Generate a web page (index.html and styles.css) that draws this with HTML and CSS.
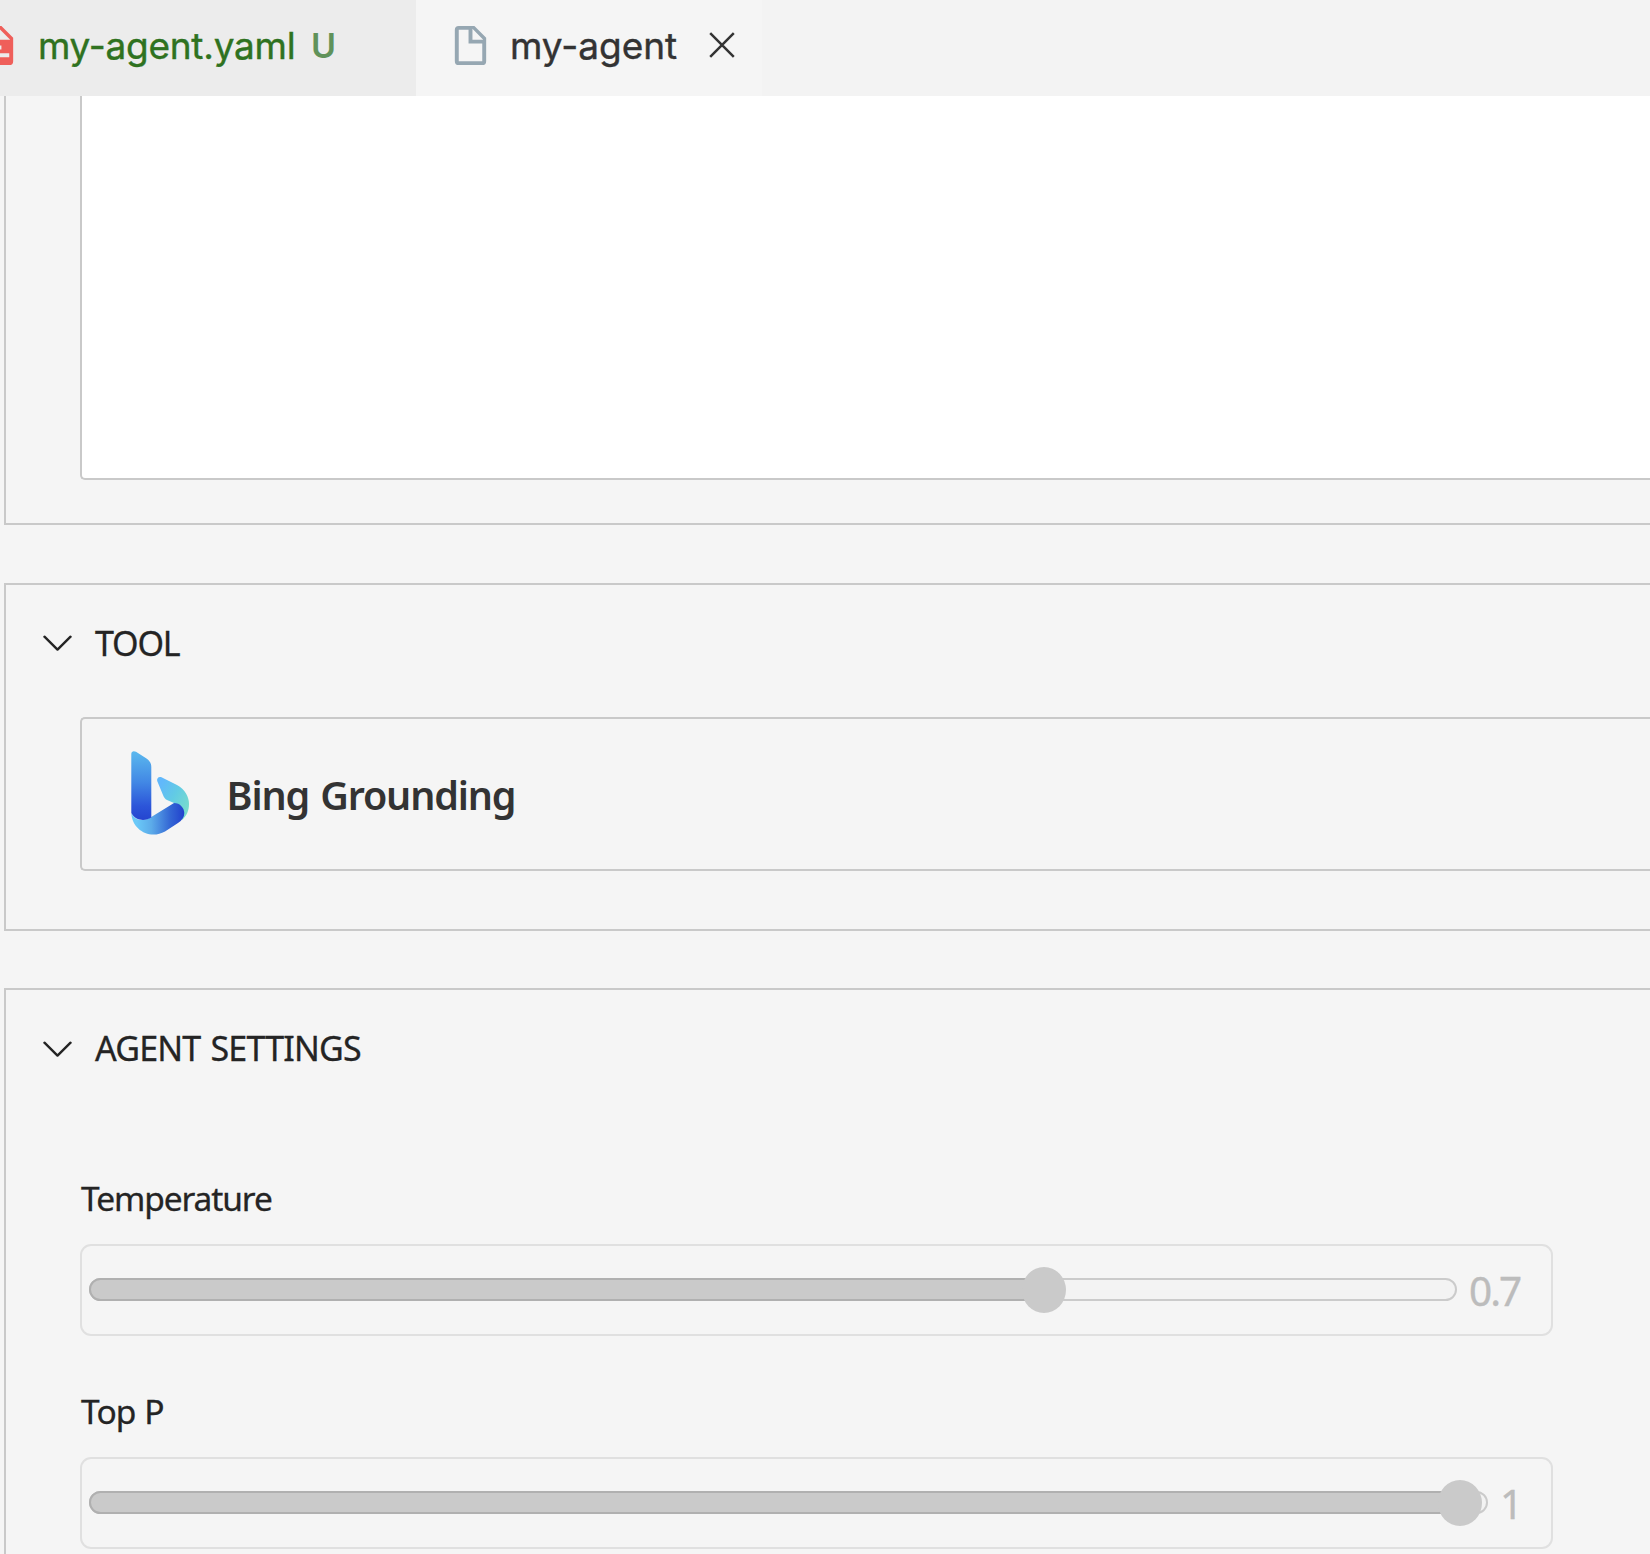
FILE: index.html
```html
<!DOCTYPE html>
<html lang="en">
<head>
<meta charset="utf-8">
<title>my-agent</title>
<link rel="stylesheet" href="styles.css">
</head>
<body>
<div class="tabs">
  <div class="tab tab-yaml">
    <svg class="file-icon" viewBox="0 0 24 24"><path fill="#ef5f5a" d="M13 9h5.5L13 3.5V9M6 2h8l6 6v12a2 2 0 0 1-2 2H6a2 2 0 0 1-2-2V4a2 2 0 0 1 2-2m12 16v-2H9v2h9m-4-4v-2H6v2h8Z"/></svg>
    <span class="tab-name">my-agent.yaml</span>
    <span class="git-status">U</span>
  </div>
  <div class="tab tab-active">
    <svg class="file-icon" viewBox="0 0 24 24"><path fill="#96a7b2" d="M13 9h5.5L13 3.5V9M6 2h8l6 6v12a2 2 0 0 1-2 2H6a2 2 0 0 1-2-2V4a2 2 0 0 1 2-2m5 2H6v16h12v-9h-7V4Z"/></svg>
    <span class="tab-name">my-agent</span>
    <svg class="close" viewBox="0 0 26 26"><path d="M1.2 1.2l23.6 23.6M24.8 1.2L1.2 24.8"/></svg>
  </div>
</div>
<main class="editor">
  <section class="panel instructions">
    <div class="textarea"></div>
  </section>
  <section class="panel tool">
    <header class="panel-head">
      <svg class="chevron" viewBox="0 0 30 17"><path d="M1.5 1.5L15 14.8L28.5 1.5"/></svg>
      <h2 class="title title-tool">TOOL</h2>
    </header>
    <div class="card">
      <svg class="bing" viewBox="0 0 58 84">
        <defs>
          <linearGradient id="stem" x1="0" y1="0" x2="0" y2="1"><stop offset="0" stop-color="#5bb9ee"/><stop offset=".45" stop-color="#4288e5"/><stop offset=".8" stop-color="#2c55d9"/><stop offset="1" stop-color="#2545cf"/></linearGradient>
          <linearGradient id="wing" x1="0" y1="0" x2="1" y2=".75"><stop offset=".15" stop-color="#61b8fb"/><stop offset=".55" stop-color="#62cbe4"/><stop offset="1" stop-color="#79dccb"/></linearGradient>
          <linearGradient id="band" x1="0" y1="0" x2="1" y2="0"><stop offset=".1" stop-color="#6ac9f8"/><stop offset=".38" stop-color="#5cabe9"/><stop offset=".72" stop-color="#3569d5"/><stop offset="1" stop-color="#2141cd"/></linearGradient>
        </defs>
        <path fill="url(#wing)" d="M26.2 30C25.5 27 28 25 31 26.5L46 34C54 38 58 46 58 53C58 60 55.5 65 51 69L43 52L36 49C34 48 33 46.500 32 44Z"/>
        <path fill="url(#band)" d="M.3 62C4 70 12 71 20.300 66L43 52C49 52 53.300 57 53.300 62C53.300 66 51 69.500 47 72L34 80.500C19 89 1 79 .3 62Z"/>
        <path fill="url(#stem)" d="M.3 3C.3 0 3 -.5 5 .8L15.500 7.500C19 10 20.300 12.500 20.300 16V66.500C13 71 4 69 .3 62Z"/>
      </svg>
      <span class="card-name">Bing Grounding</span>
    </div>
  </section>
  <section class="panel settings">
    <header class="panel-head">
      <svg class="chevron" viewBox="0 0 30 17"><path d="M1.5 1.5L15 14.8L28.5 1.5"/></svg>
      <h2 class="title title-settings">AGENT SETTINGS</h2>
    </header>
    <div class="fields">
      <div class="field">
        <div class="label label-temp">Temperature</div>
        <div class="slider">
          <div class="track"><div class="fill" style="width:955px"></div><div class="thumb"></div></div>
          <span class="value">0.7</span>
        </div>
      </div>
      <div class="field">
        <div class="label label-top">Top P</div>
        <div class="slider">
          <div class="track"><div class="fill" style="width:1371px"></div><div class="thumb"></div></div>
          <span class="value value-one">1</span>
        </div>
      </div>
    </div>
  </section>
</main>
</body>
</html>
```
FILE: styles.css
```css
* { box-sizing: border-box; }
body {
  margin: 0;
  height: 1554px;
  overflow: hidden;
  background: #f5f5f5;
  color: #242424;
  font-family: "Noto Sans", sans-serif;
}
svg { display: block; flex: none; }
.tabs {
  display: flex;
  height: 96px;
  background: #f3f3f3;
  font-family: Inter, sans-serif;
  font-size: 37px;
  line-height: 44px;
  white-space: nowrap;
}
.tab { display: flex; align-items: center; height: 96px; padding-bottom: 6px; }
.tab-yaml { width: 416px; background: #ececec; color: #2f7220; }
.tab-active { width: 346px; padding-left: 31px; background: #f5f5f5; color: #333; }
.file-icon { width: 47px; height: 47px; }
.tab-name, .git-status { padding-top: 2px; }
.tab-name { -webkit-text-stroke: 0.4px currentColor; }
.tab-yaml .file-icon { margin-left: -26px; }
.tab-yaml .tab-name { width: 257px; margin-left: 17px; letter-spacing: -0.25px; }
.git-status { margin-left: 16px; font-weight: 600; font-size: 34px; color: #60925a; }
.tab-active .tab-name { width: 170px; margin-left: 16px; }
.close { width: 26px; height: 26px; margin-left: 28.5px; }
.close path { fill: none; stroke: #333; stroke-width: 2.5; }

.editor { padding-left: 4px; }
.panel { border: 2px solid #c9c9c9; border-right: 0; }
.instructions { height: 429px; padding-left: 74px; border-top: 0; }
.textarea {
  height: 384px;
  background: #fff;
  border: solid #c9c9c9;
  border-width: 0 0 2px 2px;
  border-bottom-left-radius: 5px;
}
.tool { height: 348px; margin-top: 58px; }
.panel-head { display: flex; align-items: center; height: 116px; padding: 1px 0 0 37px; }
.settings .chevron { margin-top: 2px; }
.chevron { width: 29px; height: 17px; }
.chevron path { fill: none; stroke: #242424; stroke-width: 2.5; stroke-linecap: round; stroke-linejoin: round; }
.title { margin: 0 0 1px 23px; font-size: 34px; line-height: 46px; font-weight: 400; white-space: nowrap; }
.title-tool { letter-spacing: -1.2px; }
.title-settings { letter-spacing: -0.8px; word-spacing: 2px; }
.title, .label { -webkit-text-stroke: 0.3px currentColor; }
.card {
  display: flex;
  align-items: center;
  height: 154px;
  margin: 16px 0 0 74px;
  padding-left: 49px;
  border: 2px solid #c9c9c9;
  border-right: 0;
  border-radius: 5px 0 0 5px;
}
.bing { width: 58px; height: 84px; margin-bottom: 2px; }
.card-name {
  margin-left: 37.5px;
  padding-top: 2px;
  font-size: 39.5px;
  line-height: 56px;
  font-weight: 600;
  letter-spacing: -1.15px;
  word-spacing: 2px;
  color: #333;
  white-space: nowrap;
}
.settings { height: 620px; margin-top: 57px; }
.fields { display: flex; flex-direction: column; gap: 51px; padding: 68px 0 0 74px; }
.label { height: 48px; margin: 0 0 22px 1px; font-size: 33.5px; line-height: 48px; }
.label-temp { letter-spacing: -1.1px; }
.label-top { letter-spacing: -0.9px; word-spacing: 1px; }
.slider {
  display: flex;
  align-items: center;
  width: 1473px;
  height: 92px;
  padding: 0 30px 0 7px;
  border: 2px solid #e0e0e0;
  border-radius: 11px;
}
.track {
  display: flex;
  flex: 1;
  align-items: center;
  height: 23px;
  margin-bottom: 1px;
  border: 2px solid #cbcbcb;
  border-radius: 12px;
  background: #f3f3f3;
}
.fill {
  flex: none;
  height: 23px;
  margin-left: -2px;
  border: 2px solid #b0b0b0;
  border-radius: 12px 0 0 12px;
  background: #cacaca;
}
.thumb { flex: none; width: 44px; height: 46px; margin: 1px 0 0 -22px; border-radius: 50%; background: #cacaca; }
.value {
  width: 52px;
  margin-left: 12px;
  padding-top: 2px;
  font-size: 40.5px;
  line-height: 56px;
  letter-spacing: -2px;
  color: #bcbcbc;
  -webkit-text-stroke: 0.4px currentColor;
}
.value-one { width: 21px; }
```
